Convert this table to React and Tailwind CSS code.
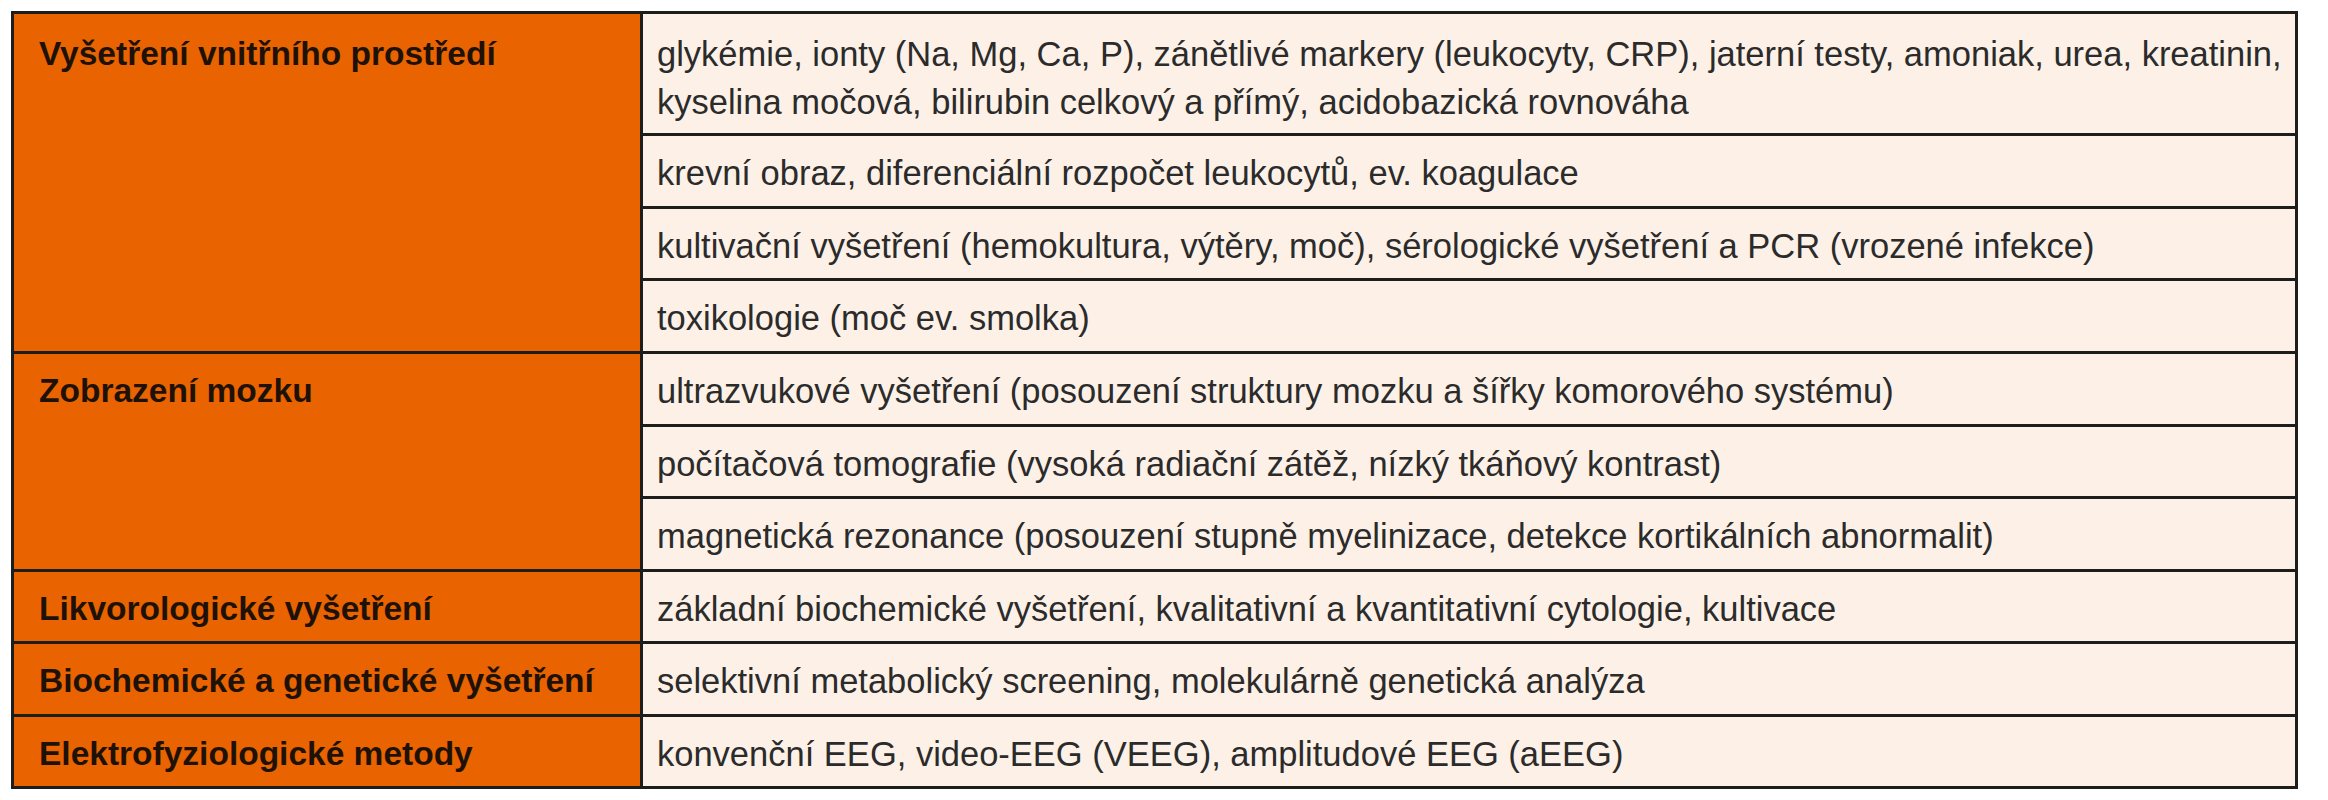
import clsx from "clsx";

const groups = [
  {
    title: "Vyšetření vnitřního prostředí",
    pt: "pt-[16px]",
    rows: [
      {
        h: "h-[119px] pt-[16px]",
        lines: [
          "glykémie, ionty (Na, Mg, Ca, P), zánětlivé markery (leukocyty, CRP), jaterní testy, amoniak, urea, kreatinin,",
          "kyselina močová, bilirubin celkový a přímý, acidobazická rovnováha",
        ],
      },
      { h: "h-[73px] pt-[13px]", lines: ["krevní obraz, diferenciální rozpočet leukocytů, ev. koagulace"] },
      {
        h: "h-[72px] pt-[13px]",
        lines: ["kultivační vyšetření (hemokultura, výtěry, moč), sérologické vyšetření a PCR (vrozené infekce)"],
      },
      { h: "h-[73px] pt-[13px]", lines: ["toxikologie (moč ev. smolka)"] },
    ],
  },
  {
    title: "Zobrazení mozku",
    pt: "pt-[13px]",
    rows: [
      { h: "h-[70px] pt-[13px]", lines: ["ultrazvukové vyšetření (posouzení struktury mozku a šířky komorového systému)"] },
      { h: "h-[72px] pt-[13px]", lines: ["počítačová tomografie (vysoká radiační zátěž, nízký tkáňový kontrast)"] },
      {
        h: "h-[73px] pt-[13px]",
        lines: ["magnetická rezonance (posouzení stupně myelinizace, detekce kortikálních abnormalit)"],
      },
    ],
  },
  {
    title: "Likvorologické vyšetření",
    pt: "pt-[13px]",
    rows: [
      {
        h: "h-[69px] pt-[13px]",
        lines: ["základní biochemické vyšetření, kvalitativní a kvantitativní cytologie, kultivace"],
      },
    ],
  },
  {
    title: "Biochemické a genetické vyšetření",
    pt: "pt-[13px]",
    rows: [{ h: "h-[70px] pt-[13px]", lines: ["selektivní metabolický screening, molekulárně genetická analýza"] }],
  },
  {
    title: "Elektrofyziologické metody",
    pt: "pt-[13px]",
    rows: [{ h: "h-[69px] pt-[13px]", lines: ["konvenční EEG, video-EEG (VEEG), amplitudové EEG (aEEG)"] }],
  },
];

const App = () => {
  return (
    <div className="min-h-screen bg-white pl-[11px] pt-[11px] font-['Liberation_Sans',Arial,sans-serif]">
      <div className="w-[2287px] border-[3px] border-[#1d1d1b]">
        {groups.map((group, i) => (
          <div key={group.title} className={clsx("flex", i > 0 && "border-t-[3px] border-[#1d1d1b]")}>
            <div
              className={clsx(
                "w-[629px] shrink-0 border-r-[3px] border-[#1d1d1b] bg-[#e96300] pl-[25px] text-[33.5px] leading-[48px] font-bold text-[#1e1208]",
                group.pt
              )}
            >
              {group.title}
            </div>
            <div className="flex flex-1 flex-col bg-[#fdf1e7]">
              {group.rows.map((row, j) => (
                <div
                  key={j}
                  className={clsx(
                    row.h,
                    "pl-[14px] text-[34.5px] leading-[48px] text-[#2b2b2b]",
                    j > 0 && "border-t-[3px] border-[#1d1d1b]"
                  )}
                >
                  {row.lines.map((line) => (
                    <div key={line} className="whitespace-nowrap">
                      {line}
                    </div>
                  ))}
                </div>
              ))}
            </div>
          </div>
        ))}
      </div>
    </div>
  );
};

export default App;
